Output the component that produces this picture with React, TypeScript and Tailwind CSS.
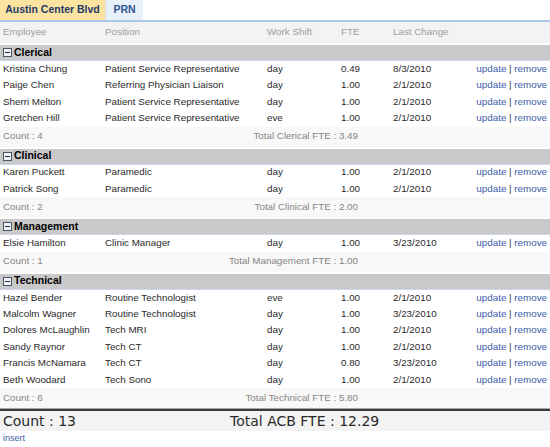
import React from "react";

type Emp = { name: string; position: string; shift: string; fte: string; changed: string };
type Group = { title: string; total: string; rows: Emp[] };

const GROUPS: Group[] = [
  {
    title: "Clerical",
    total: "Total Clerical FTE : 3.49",
    rows: [
      { name: "Kristina Chung", position: "Patient Service Representative", shift: "day", fte: "0.49", changed: "8/3/2010" },
      { name: "Paige Chen", position: "Referring Physician Liaison", shift: "day", fte: "1.00", changed: "2/1/2010" },
      { name: "Sherri Melton", position: "Patient Service Representative", shift: "day", fte: "1.00", changed: "2/1/2010" },
      { name: "Gretchen Hill", position: "Patient Service Representative", shift: "eve", fte: "1.00", changed: "2/1/2010" },
    ],
  },
  {
    title: "Clinical",
    total: "Total Clinical FTE : 2.00",
    rows: [
      { name: "Karen Puckett", position: "Paramedic", shift: "day", fte: "1.00", changed: "2/1/2010" },
      { name: "Patrick Song", position: "Paramedic", shift: "day", fte: "1.00", changed: "2/1/2010" },
    ],
  },
  {
    title: "Management",
    total: "Total Management FTE : 1.00",
    rows: [{ name: "Elsie Hamilton", position: "Clinic Manager", shift: "day", fte: "1.00", changed: "3/23/2010" }],
  },
  {
    title: "Technical",
    total: "Total Technical FTE : 5.80",
    rows: [
      { name: "Hazel Bender", position: "Routine Technologist", shift: "eve", fte: "1.00", changed: "2/1/2010" },
      { name: "Malcolm Wagner", position: "Routine Technologist", shift: "day", fte: "1.00", changed: "3/23/2010" },
      { name: "Dolores McLaughlin", position: "Tech MRI", shift: "day", fte: "1.00", changed: "2/1/2010" },
      { name: "Sandy Raynor", position: "Tech CT", shift: "day", fte: "1.00", changed: "2/1/2010" },
      { name: "Francis McNamara", position: "Tech CT", shift: "day", fte: "0.80", changed: "3/23/2010" },
      { name: "Beth Woodard", position: "Tech Sono", shift: "day", fte: "1.00", changed: "2/1/2010" },
    ],
  },
];

function MinusBox() {
  return (
    <svg width="9" height="9" viewBox="0 0 9 9" className="shrink-0">
      <rect x="0.5" y="0.5" width="8" height="8" fill="#eef1f5" stroke="#4b5668" />
      <rect x="2" y="4" width="5" height="1" fill="#2b3340" />
    </svg>
  );
}

function Row({ e }: { e: Emp }) {
  return (
    <div className="flex h-[16.4px] items-center text-[#2a2a2a]">
      <div className="w-[105px] pl-[3px]">{e.name}</div>
      <div className="w-[162px]">{e.position}</div>
      <div className="w-[74px]">{e.shift}</div>
      <div className="w-[52px]">{e.fte}</div>
      <div className="flex-1">{e.changed}</div>
      <div className="pr-[3px]">
        <a className="text-[#3b5ea8]">update</a>
        <span className="text-[#333]"> | </span>
        <a className="text-[#3b5ea8]">remove</a>
      </div>
    </div>
  );
}

export default function App() {
  const count = GROUPS.reduce((n, g) => n + g.rows.length, 0);
  return (
    <div className="w-[550px] h-[447px] overflow-hidden bg-white text-[9.8px] font-['Liberation_Sans',Arial,sans-serif]">
      {/* tabs */}
      <div className="flex h-[20px] items-stretch">
        <div className="flex w-[106px] items-center justify-center border-r border-[#d6dde8] bg-[#fce3a0] text-[10.5px] font-bold text-[#1e3a68]">
          Austin Center Blvd
        </div>
        <div className="flex w-[37px] items-center justify-center bg-[#e8f0fa] text-[10.5px] font-bold text-[#2c5594]">
          PRN
        </div>
      </div>
      <div className="h-[2px] bg-[#a9c6ea]" />

      {/* column headers */}
      <div className="flex h-[21px] items-center bg-[#f3f3f3] text-[#9d9d9d]">
        <div className="w-[105px] pl-[3px]">Employee</div>
        <div className="w-[162px]">Position</div>
        <div className="w-[74px]">Work Shift</div>
        <div className="w-[52px]">FTE</div>
        <div className="flex-1">Last Change</div>
      </div>

      {GROUPS.map((g) => (
        <div key={g.title}>
          <div className="pt-[2px]">
            <div className="flex h-[16px] items-center gap-[2px] border-b border-[#c9d7ea] bg-[#c9c9c9] pl-[3px] text-[10.5px] font-bold text-black">
              <MinusBox />
              <span>{g.title}</span>
            </div>
          </div>
          {g.rows.map((e) => (
            <Row key={e.name} e={e} />
          ))}
          <div className="flex h-[20px] items-center bg-[#f8f8f8] text-[#858585]">
            <div className="w-[200px] pl-[3px]">Count : {g.rows.length}</div>
            <div className="w-[158px] text-right">{g.total}</div>
          </div>
        </div>
      ))}

      {/* grand total */}
      <div className="h-[1px] bg-[#a8a8a8]" />
      <div className="h-[2px] bg-[#3a3a3a]" />
      <div className="flex h-[20px] items-center bg-[#f3f3f3] text-[14px] text-[#2a2a2a] font-['DejaVu_Sans',Verdana,sans-serif]">
        <div className="w-[230px] pl-[3px]">Count : {count}</div>
        <div>Total ACB FTE : 12.29</div>
      </div>
      <div className="flex h-[16px] items-center pl-[3px] text-[9px] text-[#3b5ea8]">
        <a>insert</a>
      </div>
    </div>
  );
}
